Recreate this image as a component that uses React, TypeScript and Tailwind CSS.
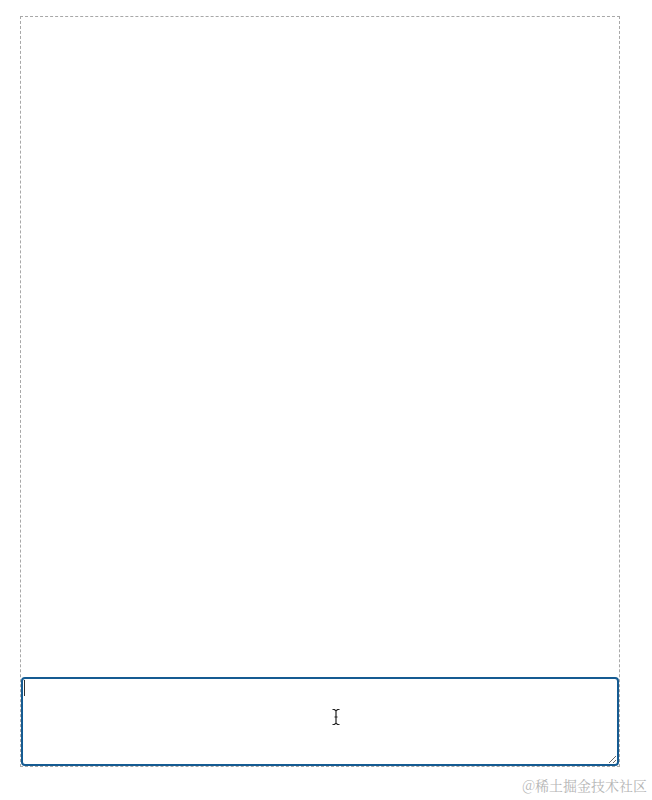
export default function App() {
  return (
    <div className="relative h-[800px] w-[652px] overflow-hidden bg-white">
      <div className="pl-5 pt-4">
        <div className="flex h-[751px] w-[600px] flex-col border border-dashed border-[#a8a8a8]">
          <div className="flex-1" />
          <div className="relative">
            <textarea
              className="block h-[89px] w-full resize-y rounded-[4px] border-2 border-[#155b92] bg-white p-1 outline-none"
              defaultValue=""
            />
            {/* text caret */}
            <span className="absolute left-[3px] top-[3px] h-[16px] w-px bg-[#333]" />
            {/* mouse I-beam cursor */}
            <svg
              className="absolute left-[309px] top-[31px]"
              width="12"
              height="18"
              viewBox="0 0 12 18"
            >
              <path
                d="M2.5 1.5h2l1.5 1.5 1.5-1.5h2M6 3v12M2.5 16.5h2l1.5-1.5 1.5 1.5h2M4.5 9h3"
                stroke="#222"
                strokeWidth="1.2"
                fill="none"
              />
            </svg>
          </div>
        </div>
      </div>
      <div
        className="absolute bottom-[4px] right-[5px] text-[14px] text-[#b5b5b5]"
        style={{ fontFamily: '"Noto Serif CJK SC", "Liberation Serif", "Noto Sans CJK SC", serif' }}
      >
        @稀土掘金技术社区
      </div>
    </div>
  );
}
